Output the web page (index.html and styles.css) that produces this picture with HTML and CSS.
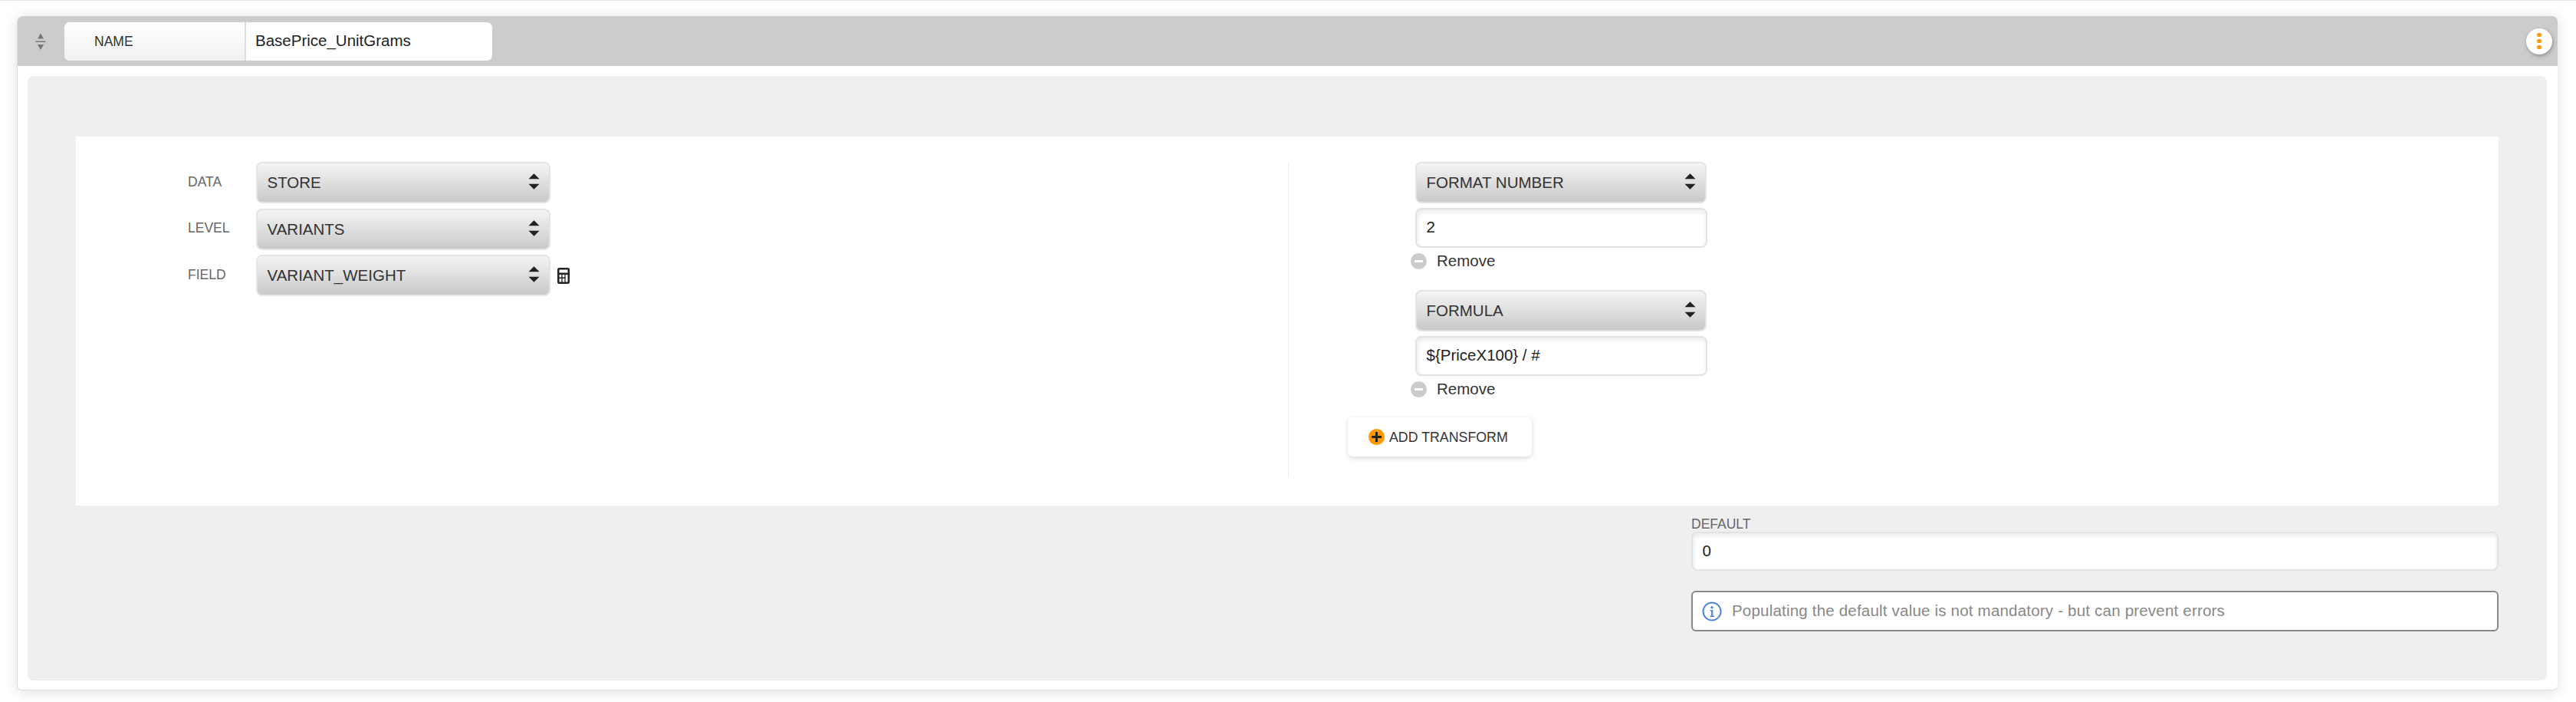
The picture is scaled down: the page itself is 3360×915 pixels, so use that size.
FILE: index.html
```html
<!DOCTYPE html>
<html lang="en">
<head>
<meta charset="utf-8">
<title>BasePrice_UnitGrams</title>
<link rel="stylesheet" href="styles.css">
</head>
<body>
<div class="card">
  <header class="card-head">
    <svg class="sort-icon" viewBox="0 0 14 24" width="14" height="24"><path d="M7 1.500l4 7h-8z"/><rect x="0.500" y="11.500" width="13" height="1.500"/><path d="M7 23l4-7h-8z"/></svg>
    <div class="name-box">
      <div class="name-label">NAME</div>
      <div class="name-value">BasePrice_UnitGrams</div>
    </div>
    <button class="menu-btn" aria-label="menu"><i></i><i></i><i></i></button>
  </header>
  <div class="card-body">
    <div class="panel">
      <section class="white">
        <div class="col-left">
          <div class="row"><span class="lbl">DATA</span>
            <div class="select">STORE<svg class="updown" viewBox="0 0 16 22" width="15" height="21"><path d="M8 0l7.500 7.500h-15zM8 22l7.500-7.500h-15z"/></svg></div></div>
          <div class="row"><span class="lbl">LEVEL</span>
            <div class="select">VARIANTS<svg class="updown" viewBox="0 0 16 22" width="15" height="21"><path d="M8 0l7.500 7.500h-15zM8 22l7.500-7.500h-15z"/></svg></div></div>
          <div class="row"><span class="lbl">FIELD</span>
            <div class="select">VARIANT_WEIGHT<svg class="updown" viewBox="0 0 16 22" width="15" height="21"><path d="M8 0l7.500 7.500h-15zM8 22l7.500-7.500h-15z"/></svg></div>
            <svg class="calc" viewBox="0 0 16 21" width="16" height="21"><path fill-rule="evenodd" d="M2.500 0h11A2.500 2.500 0 0 1 16 2.500v16a2.500 2.500 0 0 1-2.500 2.500h-11A2.500 2.500 0 0 1 0 18.500v-16A2.500 2.500 0 0 1 2.500 0zM2.500 2.500v4h11v-4zM2.500 9v3.500h2.800V9zM6.600 9v3.500h2.800V9zM10.700 9v9.500h2.800V9zM2.500 14v4.500h2.800V14zM6.600 14v4.500h2.800V14z"/></svg>
          </div>
        </div>
        <div class="col-right">
          <div class="transform">
            <div class="select">FORMAT NUMBER<svg class="updown" viewBox="0 0 16 22" width="15" height="21"><path d="M8 0l7.500 7.500h-15zM8 22l7.500-7.500h-15z"/></svg></div>
            <div class="input">2</div>
            <div class="remove"><span class="minus"></span>Remove</div>
          </div>
          <div class="transform">
            <div class="select">FORMULA<svg class="updown" viewBox="0 0 16 22" width="15" height="21"><path d="M8 0l7.500 7.500h-15zM8 22l7.500-7.500h-15z"/></svg></div>
            <div class="input">${PriceX100} / #</div>
            <div class="remove"><span class="minus"></span>Remove</div>
          </div>
          <button class="add-btn"><span class="plus"></span>ADD TRANSFORM</button>
        </div>
      </section>
      <section class="default">
        <div class="default-label">DEFAULT</div>
        <div class="input wide">0</div>
        <div class="info">
          <svg viewBox="0 0 26 26" width="26" height="26"><circle cx="13" cy="13" r="11.500" fill="none" stroke="#4f83e0" stroke-width="2"/><circle cx="13" cy="7.800" r="1.700" fill="#4f83e0"/><path d="M10.500 11h3.800v7.500h1.700v1.500h-5.500v-1.500h1.600v-6h-1.600z" fill="#4f83e0"/></svg>
          <span class="info-text">Populating the default value is not mandatory - but can prevent errors</span>
        </div>
      </section>
    </div>
  </div>
</div>
</body>
</html>
```
FILE: styles.css
```css
* { box-sizing: border-box; }
html, body { margin: 0; height: 100%; background: #fff; }
body {
  font-family: "Liberation Sans", Arial, sans-serif;
  color: #333;
  padding: 21px 24px 15px 22px;
  border-top: 1px solid #e4e4e4;
  overflow: hidden;
}
.card {
  margin-top: -1px;
  height: 879px;
  background: #fff;
  border-radius: 7px;
  border-left: 1px solid #ddd;
  border-bottom: 1px solid #ddd;
  box-shadow: 0 2px 18px rgba(0,0,0,.13);
}
.card-head {
  height: 65px;
  background: #ccc;
  border-radius: 7px 7px 0 0;
  display: flex;
  align-items: center;
  padding: 0 7px 0 23px;
}
.sort-icon { fill: #777; flex: none; }
.name-box {
  margin-left: 24px;
  width: 558px;
  height: 50px;
  display: flex;
  border-radius: 7px;
  overflow: hidden;
  background: #fff;
}
.name-label {
  width: 237px;
  padding-left: 39px;
  font-size: 17.5px;
  line-height: 50px;
  color: #333;
  background: linear-gradient(#fff, #f1f1f1);
  border-right: 2px solid #ddd;
}
.name-value {
  padding-left: 12px;
  font-size: 20.5px;
  line-height: 48px;
  color: #222;
}
.menu-btn {
  margin-left: auto;
  width: 34px;
  height: 34px;
  padding: 0;
  border: 0;
  border-radius: 50%;
  background: #fff;
  box-shadow: 1px 2px 5px rgba(0,0,0,.3);
  display: flex;
  flex-direction: column;
  align-items: center;
  justify-content: center;
  gap: 2.500px;
}
.menu-btn i { width: 5.500px; height: 5.500px; border-radius: 50%; background: #ff9800; }
.card-body { padding: 13px 14px 13px 13px; }
.panel {
  height: 788px;
  background: #efefef;
  border-radius: 8px;
  padding: 79px 63px 0;
}
.white {
  height: 481px;
  background: #fff;
  display: flex;
  padding: 33px 0 37px;
}
.col-left {
  width: 1581px;
  padding-left: 146px;
  display: flex;
  flex-direction: column;
  gap: 6.500px;
}
.row { display: flex; align-items: center; }
.lbl { width: 89px; font-size: 17.500px; color: #666; margin-bottom: 2px; }
.select {
  position: relative;
  width: 384px;
  height: 54px;
  padding-left: 12.500px;
  border: 2px solid #e4e4e4;
  border-radius: 8px;
  background: linear-gradient(#f4f4f4, #c9c9c9);
  font-size: 20.500px;
  line-height: 50px;
  color: #333;
}
.updown { position: absolute; right: 12px; top: 13px; fill: #222; }
.calc { margin-left: 9px; fill: #222; }
.col-right {
  flex: 1;
  border-left: 1px solid #eee;
  padding-left: 165px;
}
.transform { width: 381px; margin-bottom: 21px; }
.transform .select { width: 380px; }
.input {
  height: 52px;
  margin-top: 6px;
  padding-left: 12.500px;
  border: 2px solid #e3e3e3;
  border-radius: 8px;
  background: #fff;
  box-shadow: inset 1px 3px 6px rgba(0,0,0,.09);
  font-size: 20.500px;
  line-height: 46px;
  color: #222;
}
.remove {
  height: 34px;
  margin-left: -6px;
  display: flex;
  align-items: center;
  font-size: 20.500px;
  color: #333;
}
.minus {
  position: relative;
  width: 21px;
  height: 21px;
  margin-right: 13px;
  border-radius: 50%;
  background: #ccc;
}
.minus::after {
  content: "";
  position: absolute;
  left: 5px;
  right: 5px;
  top: 9px;
  height: 3px;
  background: #fff;
}
.add-btn {
  display: flex;
  align-items: center;
  width: 240px;
  height: 51px;
  margin: -1px 0 0 -88px;
  padding: 2px 0 0 27px;
  border: 0;
  border-radius: 6px;
  background: #fff;
  box-shadow: 0 2px 6px rgba(0,0,0,.16);
  font: 17.800px "Liberation Sans", Arial, sans-serif;
  color: #333;
}
.plus {
  position: relative;
  width: 21px;
  height: 21px;
  margin: -2px 6px 0 0;
  border-radius: 50%;
  background: #ff9800;
}
.plus::before, .plus::after {
  content: "";
  position: absolute;
  background: #222;
}
.plus::before { left: 4px; right: 4px; top: 9px; height: 3px; }
.plus::after { top: 4px; bottom: 4px; left: 9px; width: 3px; }
.default { margin: 14px 0 0 2107px; }
.default-label { font-size: 17.500px; line-height: 20px; color: #666; }
.input.wide { margin-top: 0; height: 51px; }
.info {
  margin-top: 26px;
  height: 53px;
  padding-left: 12px;
  display: flex;
  align-items: center;
  gap: 13px;
  background: #fff;
  border: 2px solid #888;
  border-radius: 6px;
  font-size: 20.500px;
  letter-spacing: .2px;
  color: #888;
}
.info svg { flex: none; }
.info-text { margin-bottom: 1px; }
```
